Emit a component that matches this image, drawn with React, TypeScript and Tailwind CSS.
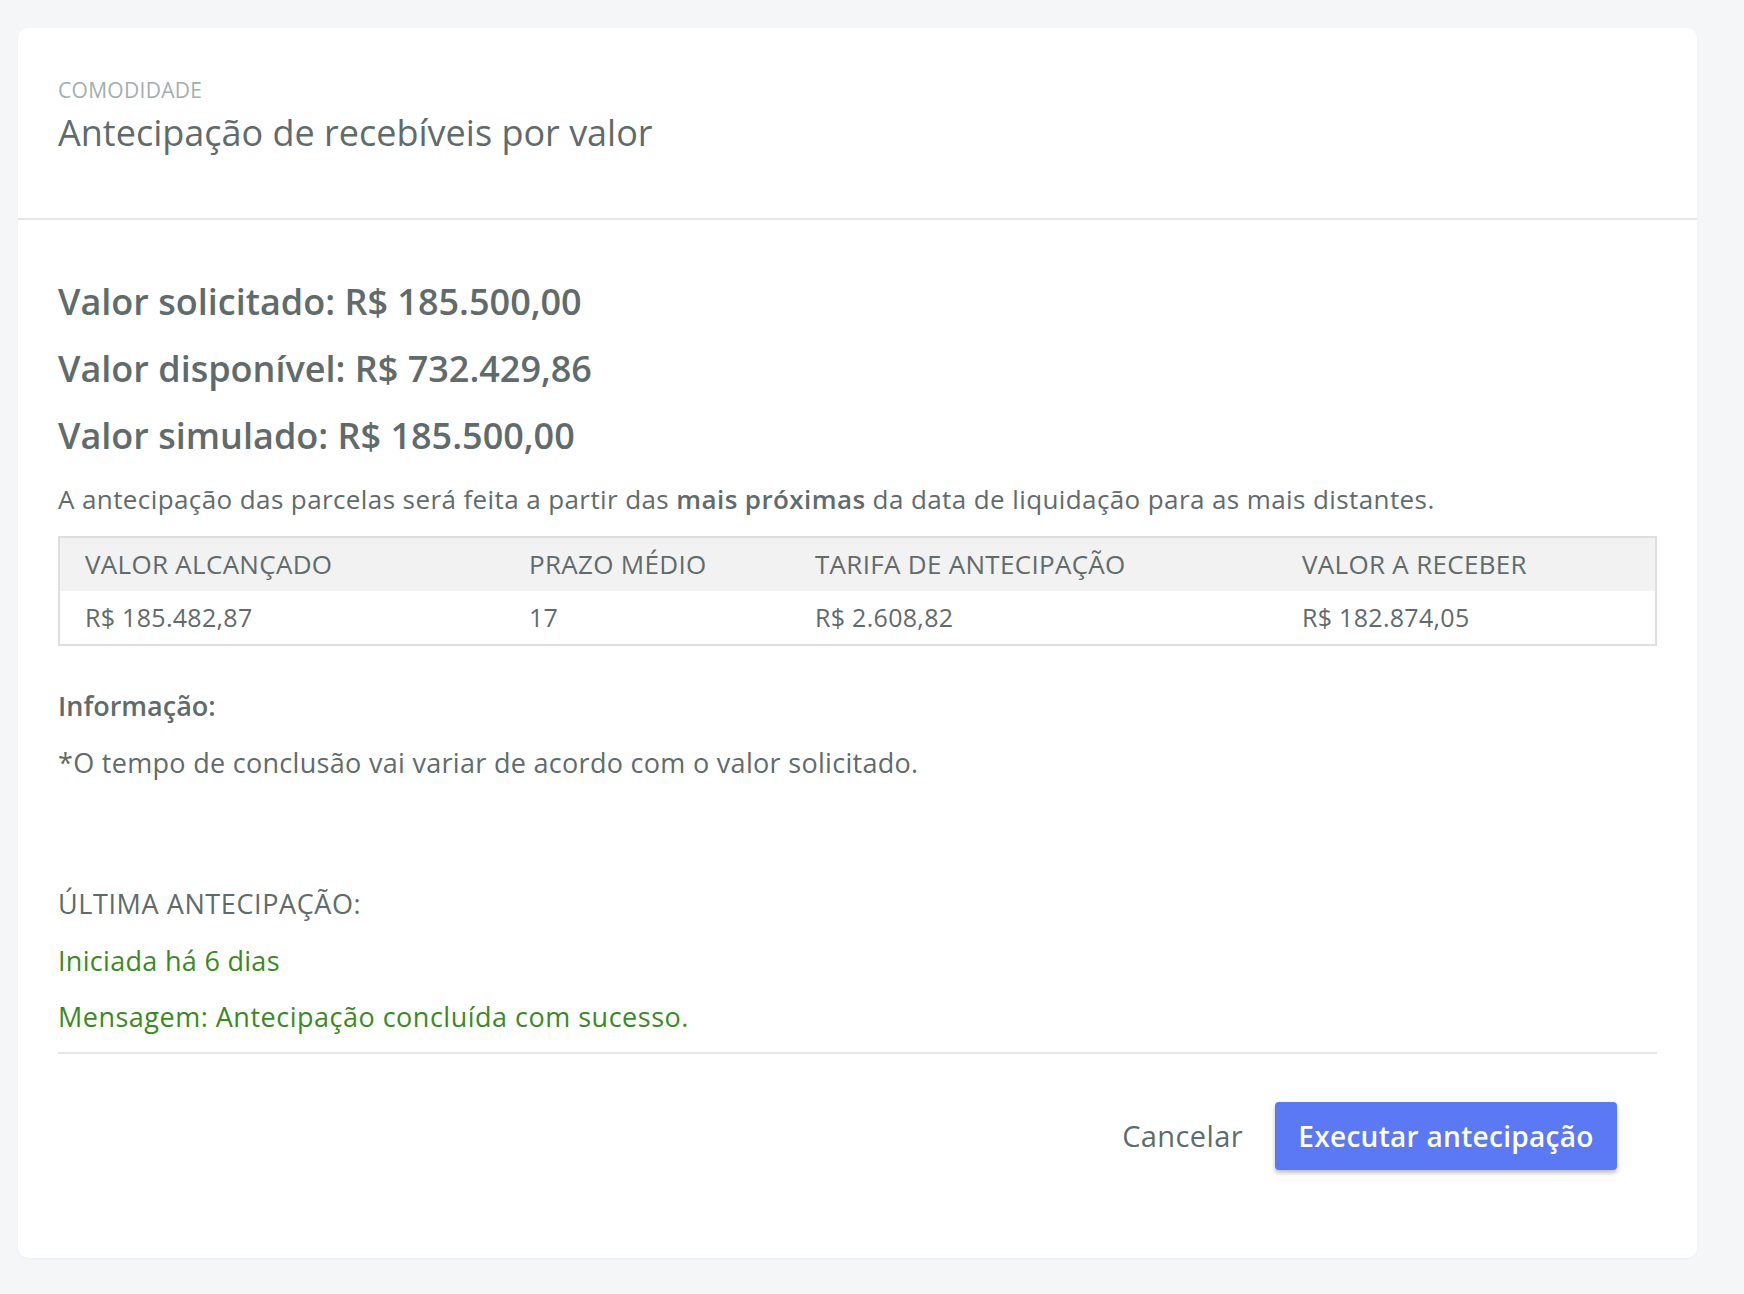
import React from 'react';

const font = { fontFamily: '"Open Sans", Lato, sans-serif' };

const columns = [
  { label: 'Valor alcançado', value: 'R$ 185.482,87', width: 'w-[445px]' },
  { label: 'Prazo médio', value: '17', width: 'w-[286px]' },
  { label: 'Tarifa de antecipação', value: 'R$ 2.608,82', width: 'w-[487px]' },
  { label: 'Valor a receber', value: 'R$ 182.874,05', width: '' },
];

const App: React.FC = () => {
  return (
    <div className="min-h-screen bg-[#f5f6f8] pt-[28px] pl-[18px] pb-[35px]" style={font}>
      <div className="w-[1679px] bg-white rounded-[10px] shadow-[0_1px_3px_rgba(0,0,0,0.04)] text-[#606b6b]">
        {/* cabeçalho */}
        <div className="h-[192px] border-b-2 border-[#e6e6e6] px-10 pt-[50px]">
          <p className="text-[21px] leading-[24px] uppercase tracking-[0.3px] text-[#a4aeae]">Comodidade</p>
          <h1 className="mt-[9px] text-[36px] leading-[44px] font-normal">
            Antecipação de recebíveis por valor
          </h1>
        </div>

        <div className="px-10 pt-[48px] pb-[88px]">
          <div className="text-[36px] leading-[67px] font-semibold">
            <p>Valor solicitado: R$ 185.500,00</p>
            <p>Valor disponível: R$ 732.429,86</p>
            <p>Valor simulado: R$ 185.500,00</p>
          </div>

          <p className="mt-[12px] text-[26px] leading-[36px] tracking-[0.4px]">
            A antecipação das parcelas será feita a partir das{' '}
            <span className="font-semibold">mais próximas</span> da data de liquidação para as mais distantes.
          </p>

          <table className="mt-[19px] w-full border-2 border-[#dedede] border-collapse">
            <thead>
              <tr className="bg-[#f2f2f2] h-[54px]">
                {columns.map((c) => (
                  <th
                    key={c.label}
                    className={`${c.width} pl-[25px] text-left text-[26px] font-normal uppercase tracking-[0.3px]`}
                  >
                    {c.label}
                  </th>
                ))}
              </tr>
            </thead>
            <tbody>
              <tr className="h-[54px]">
                {columns.map((c) => (
                  <td key={c.label} className="pl-[25px] text-[25px] tracking-[0.3px]">
                    {c.value}
                  </td>
                ))}
              </tr>
            </tbody>
          </table>

          <p className="mt-[44px] text-[27px] leading-[32px] font-semibold">Informação:</p>
          <p className="mt-[25px] text-[27px] leading-[32px] tracking-[0.3px]">
            *O tempo de conclusão vai variar de acordo com o valor solicitado.
          </p>

          <p className="mt-[109px] text-[27px] leading-[32px] uppercase tracking-[0.6px]">Última antecipação:</p>
          <p className="mt-[25px] text-[27px] leading-[32px] tracking-[0.3px] text-[#3a8a1e]">Iniciada há 6 dias</p>
          <p className="mt-[24px] text-[27px] leading-[32px] tracking-[0.5px] text-[#3a8a1e]">
            Mensagem: Antecipação concluída com sucesso.
          </p>

          <div className="mt-[19px] border-t-2 border-[#e6e6e6]" />

          <div className="mt-[48px] pr-10 flex justify-end items-center gap-8">
            <button className="text-[29px] tracking-[0.4px] text-[#606b6b]">Cancelar</button>
            <button className="h-[68px] w-[342px] rounded-[4px] bg-[#5b78f5] text-white text-[28px] font-semibold tracking-[0.3px] shadow-[0_3px_4px_rgba(0,0,0,0.25)]">
              Executar antecipação
            </button>
          </div>
        </div>
      </div>
    </div>
  );
};

export default App;
